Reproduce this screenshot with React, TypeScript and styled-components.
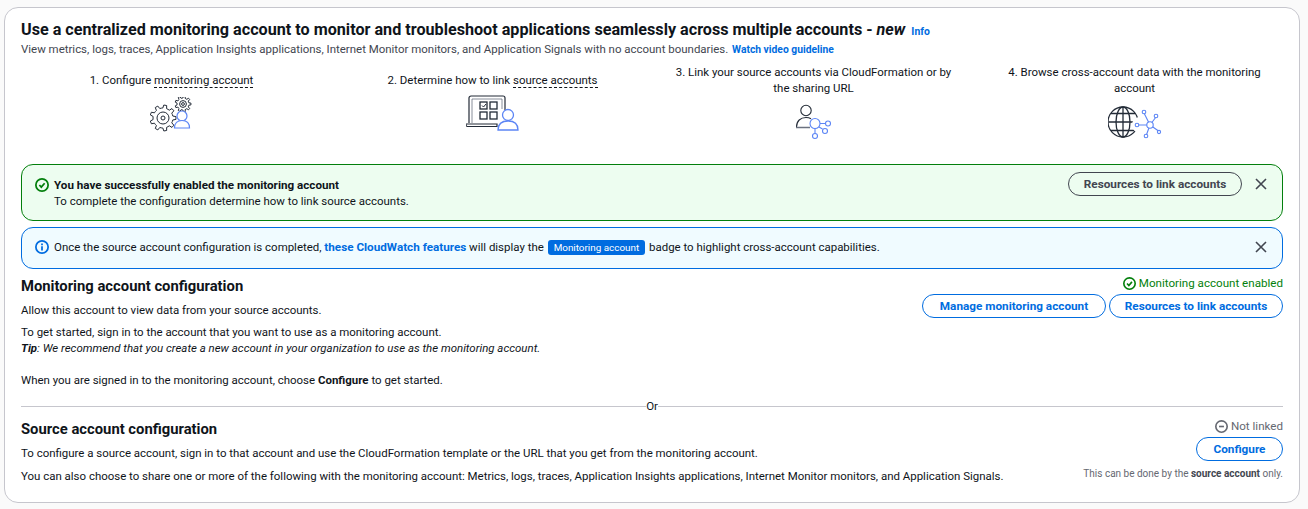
import React from "react";
import styled, { createGlobalStyle } from "styled-components";

const Global = createGlobalStyle`
  html, body { margin: 0; padding: 0; background: #fafafa; }
  body { font-family: Roboto, "Open Sans", sans-serif; color: #0f141a; font-size: 11.46px; }
  * { box-sizing: border-box; }
`;

const Card = styled.div`
  margin: 7px 8px 0 4px;
  width: 1296px;
  height: 496px;
  background: #fff;
  border: 1px solid #c6c6cd;
  border-radius: 14px;
  padding: 11px 16px 0 16px;
`;
const Title = styled.div`
  display: flex;
  align-items: baseline;
  gap: 6px;
  height: 22px;
`;
const TitleText = styled.h1`
  margin: 0;
  font-size: 16.16px;
  line-height: 22px;
  font-weight: 700;
  em { font-weight: 700; }
`;
const InfoLink = styled.a`
  font-size: 10.4px;
  font-weight: 700;
  color: #006ce0;
`;
const Sub = styled.p`
  margin: 0;
  font-size: 11.46px;
  line-height: 16px;
  color: #424650;
  a { color: #006ce0; font-weight: 700; font-size: 10.3px; margin-left: 1px; }
`;
const Steps = styled.div`
  display: grid;
  grid-template-columns: repeat(4, 321px);
  margin: 6px 0 0 -10px;
  height: 100px;
`;
const Step = styled.div`
  display: flex;
  flex-direction: column;
  align-items: center;
  text-align: center;
  font-size: 11.46px;
  line-height: 16px;
  padding: 0 20px;
`;
const StepText = styled.div<{ $single?: boolean }>`
  margin-top: ${(p) => (p.$single ? "8px" : "0")};
  min-height: ${(p) => (p.$single ? "16px" : "32px")};
`;
const Dashed = styled.span`
  border-bottom: 1px dashed #0f141a;
`;
const IconWrap = styled.div<{ $top: number }>`
  margin-top: ${(p) => p.$top}px;
  line-height: 0;
`;
const Alert = styled.div<{ $kind: "success" | "info" }>`
  display: flex;
  align-items: flex-start;
  margin-top: ${(p) => (p.$kind === "success" ? "0" : "6px")};
  height: ${(p) => (p.$kind === "success" ? "57px" : "42px")};
  border-radius: 12px;
  border: 1px solid ${(p) => (p.$kind === "success" ? "#037f0c" : "#006ce0")};
  background: ${(p) => (p.$kind === "success" ? "#edfdf0" : "#f0fbff")};
  padding: ${(p) => (p.$kind === "success" ? "12px" : "11px")} 13px 0 13px;
`;
const AlertIcon = styled.div`
  width: 16px;
  margin-right: 3px;
  padding-top: 1px;
  line-height: 0;
`;
const AlertBody = styled.div`
  flex: 1;
  font-size: 11.46px;
  line-height: 16px;
  strong { font-weight: 700; font-size: 11.65px; }
  a { color: #006ce0; font-weight: 700; font-size: 11.7px; }
`;
const Badge = styled.span`
  display: inline-block;
  background: #006ce0;
  color: #fff;
  border-radius: 3px;
  padding: 0 6px;
  font-size: 9.9px;
  line-height: 15px;
  margin: 0 1px;
`;
const Btn = styled.button<{ $tone?: "blue" | "grey"; $w: number }>`
  height: 24px;
  width: ${(p) => p.$w}px;
  padding: 0;
  border-radius: 12px;
  background: transparent;
  font-family: inherit;
  font-size: 11.75px;
  font-weight: 700;
  border: 1px solid ${(p) => (p.$tone === "grey" ? "#424650" : "#006ce0")};
  color: ${(p) => (p.$tone === "grey" ? "#424650" : "#006ce0")};
  white-space: nowrap;
`;
const AlertBtn = styled(Btn)`
  margin-top: -5px;
`;
const Close = styled.div<{ $lift?: boolean }>`
  margin-left: 11px;
  margin-top: ${(p) => (p.$lift ? "-1px" : "0")};
  line-height: 0;
`;
const Section = styled.div<{ $mt: number }>`
  display: flex;
  justify-content: space-between;
  margin-top: ${(p) => p.$mt}px;
`;
const Heading = styled.h2`
  margin: 0;
  font-size: 14.8px;
  line-height: 20px;
  font-weight: 700;
`;
const Para = styled.p<{ $mt?: number }>`
  margin: ${(p) => p.$mt ?? 0}px 0 0;
  font-size: 11.46px;
  line-height: 16px;
  strong { font-weight: 700; }
`;
const Side = styled.div`
  display: flex;
  flex-direction: column;
  align-items: flex-end;
`;
const Status = styled.div<{ $c: string }>`
  display: flex;
  align-items: center;
  gap: 3px;
  font-size: 11.6px;
  line-height: 14px;
  color: ${(p) => p.$c};
`;
const BtnRow = styled.div`
  display: flex;
  gap: 3px;
  margin-top: 4px;
`;
const Divider = styled.div`
  display: flex;
  align-items: center;
  height: 16px;
  font-size: 11.46px;
  color: #0f141a;
  margin-top: 10px;
  &::before, &::after { content: ""; flex: 1; height: 1px; background: #c6c6cd; }
`;
const Note = styled.div`
  font-size: 10px;
  line-height: 14px;
  color: #656871;
  margin-top: 6px;
  strong { color: #424650; font-weight: 700; }
`;

const CheckIcon = ({ c, s = 14 }: { c: string; s?: number }) => (
  <svg width={s} height={s} viewBox="0 0 16 16" fill="none" stroke={c} strokeWidth="2">
    <circle cx="8" cy="8" r="7" />
    <path d="M5 8l2.2 2.4L11 6" />
  </svg>
);
const X = () => (
  <svg width="16" height="16" viewBox="0 0 16 16" fill="none" stroke="#424650" strokeWidth="1.6">
    <path d="M3 3l10 10M13 3L3 13" />
  </svg>
);

const gear = (cx: number, cy: number, ro: number, ri: number, teeth: number) => {
  const pts: string[] = [];
  for (let i = 0; i < teeth; i++) {
    const a = (i / teeth) * Math.PI * 2;
    const w = (Math.PI * 2) / teeth;
    const p = (r: number, t: number) => `${(cx + r * Math.cos(t)).toFixed(2)} ${(cy + r * Math.sin(t)).toFixed(2)}`;
    pts.push(p(ri, a - w * 0.5), p(ri, a - w * 0.28), p(ro, a - w * 0.16), p(ro, a + w * 0.16), p(ri, a + w * 0.28));
  }
  return "M" + pts.join("L") + "Z";
};

const dark = "#232b37";
const blue = "#5c85f5";

const GearIcon = () => (
  <svg width="44" height="38" viewBox="0 0 44 38" fill="none" strokeWidth="1">
    <g stroke={dark}>
      <path d={gear(13, 21, 13, 10, 9)} />
      <circle cx="13" cy="21" r="6" />
      <circle cx="13" cy="21" r="2" />
      <path d={gear(33, 7, 8, 6, 9)} />
      <circle cx="33" cy="7" r="3.4" />
      <circle cx="33" cy="7" r="1.4" />
    </g>
    <g stroke={blue} strokeWidth="1.2" fill="#fff">
      <circle cx="32" cy="19" r="5" />
      <path d="M24.5 31c0-5 3-7.500 7.500-7.500s7.500 2.500 7.500 7.500z" />
    </g>
  </svg>
);
const LaptopIcon = () => (
  <svg width="54" height="36" viewBox="1 0 54 36" fill="none">
    <g stroke={dark} strokeWidth="1.2">
      <path d="M4 28V3a2 2 0 0 1 2-2h32a2 2 0 0 1 2 2v12" />
      <path d="M7 28V4h30v10" strokeWidth=".8" stroke="#6b7280" />
      <path d="M1 29h31v2.500H3a2 2 0 0 1-2-2.500z" />
      <rect x="15" y="7" width="7" height="7" strokeWidth="1.3" />
      <path d="M17 10.500l1.500 1.500 2.500-3" strokeWidth="1" />
      <rect x="25" y="7" width="7" height="7" strokeWidth="1.3" />
      <rect x="15" y="17" width="7" height="7" strokeWidth="1.3" />
      <rect x="25" y="17" width="7" height="7" strokeWidth="1.3" />
    </g>
    <g stroke={blue} strokeWidth="1.3" fill="#fff">
      <circle cx="43" cy="20" r="5.500" />
      <path d="M33 35c0-6 4-9 10-9s10 3 10 9z" />
    </g>
  </svg>
);
const LinkIcon = () => (
  <svg width="38" height="36" viewBox="0 0 38 36" fill="none">
    <g stroke={dark} strokeWidth="1.1">
      <circle cx="11" cy="6.500" r="5.200" />
      <path d="M1.500 23c0-6 4-9.500 9.500-9.500 2 0 3.500.3 5 1.200" />
    </g>
    <path d="M1 23.500h14" stroke="#6b7280" strokeWidth="1.500" />
    <g stroke={blue} strokeWidth="1.100">
      <circle cx="20" cy="19.500" r="5" />
      <path d="M25 19.500h5M24 23l3.500 2M20 24.500v5" />
      <circle cx="33" cy="19.500" r="2.500" />
      <circle cx="30" cy="27" r="2.500" />
      <circle cx="20" cy="32" r="2.500" />
    </g>
  </svg>
);
const GlobeIcon = () => (
  <svg width="54" height="36" viewBox="1 0 54 36" fill="none">
    <g stroke={dark} strokeWidth="1.3">
      <circle cx="16" cy="18" r="15" />
      <ellipse cx="16" cy="18" rx="7" ry="15" />
      <path d="M16 3v30M1.500 18h29M4 9.500h24M4 26.500h24" />
    </g>
    <circle cx="33" cy="21" r="8" fill="#fff" />
    <g stroke={blue} strokeWidth="1.100" fill="#fff">
      <path d="M43 21l-6-12M43 21l6-8M43 21l10 7M43 21l-4 11M43 21H31" />
      <circle cx="43" cy="21" r="3.200" />
      <circle cx="37" cy="8" r="1.800" />
      <circle cx="49" cy="12" r="1.800" />
      <circle cx="52" cy="28" r="1.600" />
      <circle cx="39" cy="32" r="1.800" />
      <circle cx="30" cy="21" r="1.800" />
    </g>
  </svg>
);

export default function App() {
  return (
    <>
      <Global />
      <Card>
        <Title>
          <TitleText>
            Use a centralized monitoring account to monitor and troubleshoot applications seamlessly across multiple accounts - <em>new</em>
          </TitleText>
          <InfoLink>Info</InfoLink>
        </Title>
        <Sub>
          View metrics, logs, traces, Application Insights applications, Internet Monitor monitors, and Application Signals with no account boundaries. <a>Watch video guideline</a>
        </Sub>
        <Steps>
          <Step>
            <StepText $single>1. Configure <Dashed>monitoring account</Dashed></StepText>
            <IconWrap $top={9}><GearIcon /></IconWrap>
          </Step>
          <Step>
            <StepText $single>2. Determine how to link <Dashed>source accounts</Dashed></StepText>
            <IconWrap $top={7}><LaptopIcon /></IconWrap>
          </Step>
          <Step>
            <StepText>3. Link your source accounts via CloudFormation or by the sharing URL</StepText>
            <IconWrap $top={8}><LinkIcon /></IconWrap>
          </Step>
          <Step>
            <StepText>4. Browse cross-account data with the monitoring account</StepText>
            <IconWrap $top={8}><GlobeIcon /></IconWrap>
          </Step>
        </Steps>
        <Alert $kind="success">
          <AlertIcon><CheckIcon c="#037f0c" /></AlertIcon>
          <AlertBody>
            <strong>You have successfully enabled the monitoring account</strong>
            <br />
            To complete the configuration determine how to link source accounts.
          </AlertBody>
          <AlertBtn $tone="grey" $w={174}>Resources to link accounts</AlertBtn>
          <Close $lift><X /></Close>
        </Alert>
        <Alert $kind="info">
          <AlertIcon>
            <svg width="14" height="14" viewBox="0 0 16 16" fill="none" stroke="#006ce0" strokeWidth="2">
              <circle cx="8" cy="8" r="7" />
              <path d="M8 7v5M8 4v2" />
            </svg>
          </AlertIcon>
          <AlertBody>
            Once the source account configuration is completed, <a>these CloudWatch features</a> will display the <Badge>Monitoring account</Badge> badge to highlight cross-account capabilities.
          </AlertBody>
          <Close><X /></Close>
        </Alert>
        <Section $mt={7}>
          <div>
            <Heading>Monitoring account configuration</Heading>
            <Para $mt={6}>Allow this account to view data from your source accounts.</Para>
            <Para $mt={6}>To get started, sign in to the account that you want to use as a monitoring account.</Para>
            <Para><em><strong>Tip</strong>: We recommend that you create a new account in your organization to use as the monitoring account.</em></Para>
            <Para $mt={16}>When you are signed in to the monitoring account, choose <strong>Configure</strong> to get started.</Para>
          </div>
          <Side>
            <Status $c="#037f0c"><CheckIcon c="#037f0c" s={13} />Monitoring account enabled</Status>
            <BtnRow>
              <Btn $w={184}>Manage monitoring account</Btn>
              <Btn $w={174}>Resources to link accounts</Btn>
            </BtnRow>
          </Side>
        </Section>
        <Divider>Or</Divider>
        <Section $mt={5}>
          <div>
            <Heading>Source account configuration</Heading>
            <Para $mt={6}>To configure a source account, sign in to that account and use the CloudFormation template or the URL that you get from the monitoring account.</Para>
            <Para $mt={7}>You can also choose to share one or more of the following with the monitoring account: Metrics, logs, traces, Application Insights applications, Internet Monitor monitors, and Application Signals.</Para>
          </div>
          <Side>
            <Status $c="#656871">
              <svg width="13" height="13" viewBox="0 0 16 16" fill="none" stroke="#656871" strokeWidth="2">
                <circle cx="8" cy="8" r="7" />
                <path d="M5 8h6" />
              </svg>
              Not linked
            </Status>
            <BtnRow><Btn $w={87}>Configure</Btn></BtnRow>
            <Note>This can be done by the <strong>source account</strong> only.</Note>
          </Side>
        </Section>
      </Card>
    </>
  );
}
